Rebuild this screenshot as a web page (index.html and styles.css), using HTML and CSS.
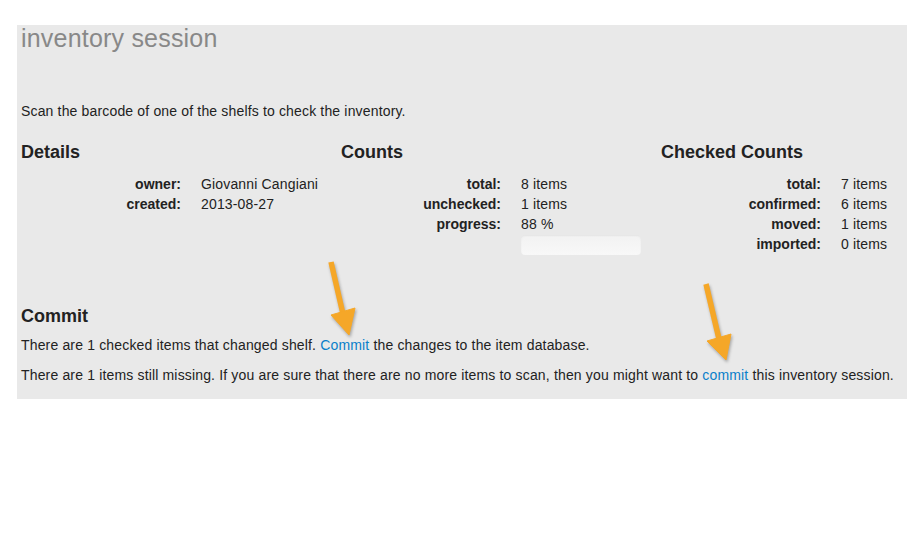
FILE: index.html
```html
<!DOCTYPE html>
<html>
<head>
<meta charset="utf-8">
<link rel="stylesheet" href="styles.css">
</head>
<body>
<div class="panel">
  <h1 class="title">inventory session</h1>
  <p class="intro">Scan the barcode of one of the shelfs to check the inventory.</p>
  <div class="columns">
    <section class="col">
      <h4>Details</h4>
      <dl>
        <dt>owner:</dt><dd>Giovanni Cangiani</dd>
        <dt>created:</dt><dd>2013-08-27</dd>
      </dl>
    </section>
    <section class="col">
      <h4>Counts</h4>
      <dl>
        <dt>total:</dt><dd>8 items</dd>
        <dt>unchecked:</dt><dd>1 items</dd>
        <dt>progress:</dt><dd>88 %</dd>
        <dt></dt><dd><div class="progress"></div></dd>
      </dl>
    </section>
    <section class="col">
      <h4>Checked Counts</h4>
      <dl>
        <dt>total:</dt><dd>7 items</dd>
        <dt>confirmed:</dt><dd>6 items</dd>
        <dt>moved:</dt><dd>1 items</dd>
        <dt>imported:</dt><dd>0 items</dd>
      </dl>
    </section>
  </div>
  <h4 class="commit-title">Commit</h4>
  <p class="line">There are 1 checked items that changed shelf. <a href="#">Commit</a> the changes to the item database.</p>
  <p class="line last">There are 1 items still missing. If you are sure that there are no more items to scan, then you might want to <a href="#">commit</a> this inventory session.</p>
</div>
<svg class="arrows" width="924" height="560" viewBox="0 0 924 560">
  <g fill="#f5a728" stroke="#f5a728">
    <line x1="331" y1="262" x2="343" y2="314" stroke-width="5.5"/>
    <polygon points="331,315 355,308 349,335" stroke-width="1" stroke-linejoin="round"/>
    <line x1="706" y1="284" x2="719" y2="339" stroke-width="5.5"/>
    <polygon points="707,341 731,334 726,360" stroke-width="1" stroke-linejoin="round"/>
  </g>
</svg>
</body>
</html>
```

FILE: styles.css
```css
html, body {
  margin: 0;
  padding: 0;
  background: #ffffff;
}
body {
  font-family: "Liberation Sans", Arial, Helvetica, sans-serif;
  font-size: 14px;
  line-height: 20px;
  color: #222;
  letter-spacing: 0.16px;
  width: 924px;
  height: 560px;
  position: relative;
  overflow: hidden;
}
.panel {
  margin: 25px 0 0 17px;
  width: 890px;
  box-sizing: border-box;
  padding: 0 4px 14px 4px;
  background: #e9e9e9;
}
.title {
  margin: 0;
  font-size: 25px;
  font-weight: normal;
  line-height: 26px;
  letter-spacing: 0.2px;
  color: #888888;
}
.intro {
  margin: 50px 0 0 0;
}
.columns {
  display: grid;
  grid-template-columns: 300px 300px 300px;
  column-gap: 20px;
  margin-top: 21px;
  width: 940px;
}
h4 {
  margin: 0;
  font-size: 18px;
  line-height: 20px;
  font-weight: bold;
  letter-spacing: 0;
  color: #222;
}
dl {
  margin: 12px 0 0 0;
  display: grid;
  grid-template-columns: 160px 1fr;
  column-gap: 20px;
}
dt {
  text-align: right;
  font-weight: bold;
  letter-spacing: 0;
  min-height: 20px;
}
dd {
  margin: 0;
}
.progress {
  margin-top: 1px;
  width: 120px;
  height: 20px;
  border-radius: 4px;
  background: linear-gradient(#f2f2f2, #f8f8f8);
  box-shadow: inset 0 1px 2px rgba(0,0,0,0.06);
}
.commit-title {
  margin-top: 51px;
}
.line {
  margin: 9px 0 0 0;
}
.line + .line {
  margin-top: 10px;
}
a {
  color: #0a7fc9;
  text-decoration: none;
}
.arrows {
  position: absolute;
  top: 0;
  left: 0;
  pointer-events: none;
  filter: drop-shadow(1px 2px 1.5px rgba(0,0,0,0.3));
}
```
